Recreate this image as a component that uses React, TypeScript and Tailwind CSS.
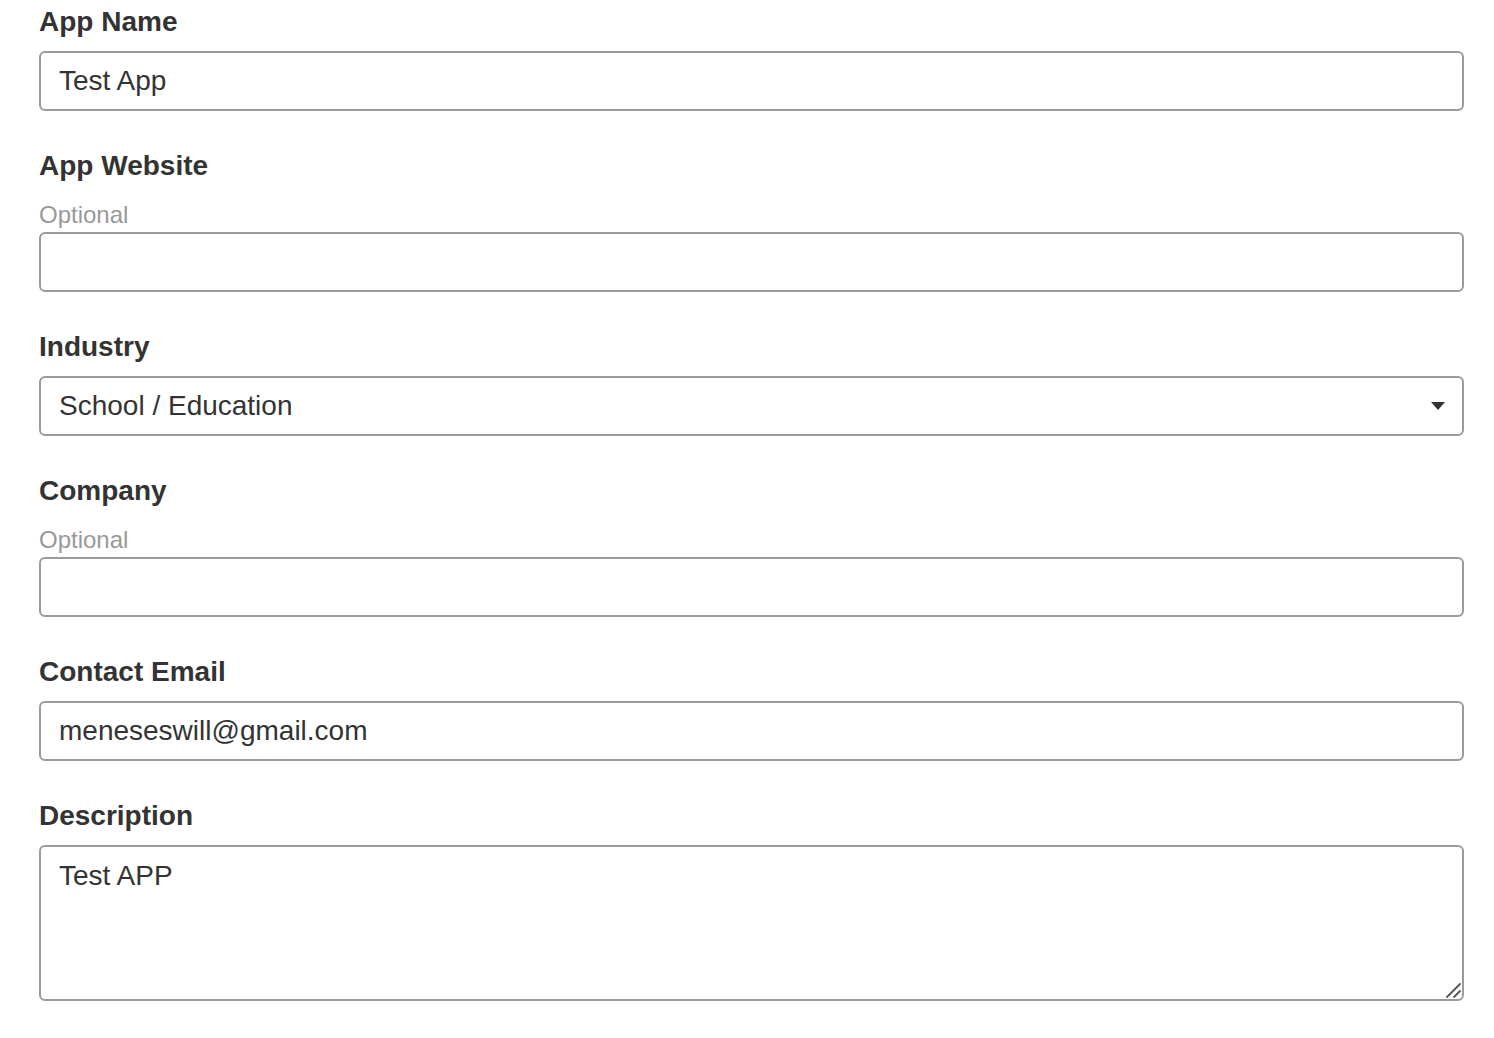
import React from 'react';

const font = { fontFamily: '"Liberation Sans", Arial, Helvetica, sans-serif' };

const Field: React.FC<{ label: string; optional?: boolean; children: React.ReactNode }> = ({ label, optional, children }) => (
  <div className="mb-[33px]">
    <label className="block text-[28px] leading-[44px] font-bold text-[#333]">{label}</label>
    {optional && <div className="mt-[17px] text-[24px] leading-[20px] text-[#999]">Optional</div>}
    <div className="mt-[7px]">{children}</div>
  </div>
);

const inputCls =
  'block w-full h-[60px] px-[18px] border-2 border-[#9b9b9b] rounded-[6px] bg-white text-[28px] text-[#333] outline-none';

export default function App() {
  return (
    <div className="min-h-screen bg-white" style={font}>
      <form className="w-[1425px] ml-[39px]">
        <Field label="App Name">
          <input className={inputCls} defaultValue="Test App" style={font} />
        </Field>
        <Field label="App Website" optional>
          <input className={inputCls} defaultValue="" style={font} />
        </Field>
        <Field label="Industry">
          <div className="relative">
            <select className={`${inputCls} appearance-none`} defaultValue="edu" style={font}>
              <option value="edu">School / Education</option>
              <option value="biz">Business</option>
            </select>
            {/* caret */}
            <svg className="absolute right-[19px] top-[26px] pointer-events-none" width="14" height="8" viewBox="0 0 14 8">
              <path d="M0 0 H14 L7 8 Z" fill="#333" />
            </svg>
          </div>
        </Field>
        <Field label="Company" optional>
          <input className={inputCls} defaultValue="" style={font} />
        </Field>
        <Field label="Contact Email">
          <input className={inputCls} defaultValue="meneseswill@gmail.com" style={font} />
        </Field>
        <Field label="Description">
          <div className="relative">
            <textarea
              className="block w-full h-[156px] px-[18px] pt-[12px] border-2 border-[#9b9b9b] rounded-[6px] bg-white text-[28px] leading-[34px] text-[#333] outline-none resize-none"
              defaultValue="Test APP"
              style={font}
            />
            {/* resize grip */}
            <svg className="absolute right-[3px] bottom-[3px] pointer-events-none" width="16" height="16" viewBox="0 0 16 16">
              <path d="M2 15 L15 2 M9 15 L15 9" stroke="#555" strokeWidth="1.8" strokeLinecap="round" />
            </svg>
          </div>
        </Field>
      </form>
    </div>
  );
}
